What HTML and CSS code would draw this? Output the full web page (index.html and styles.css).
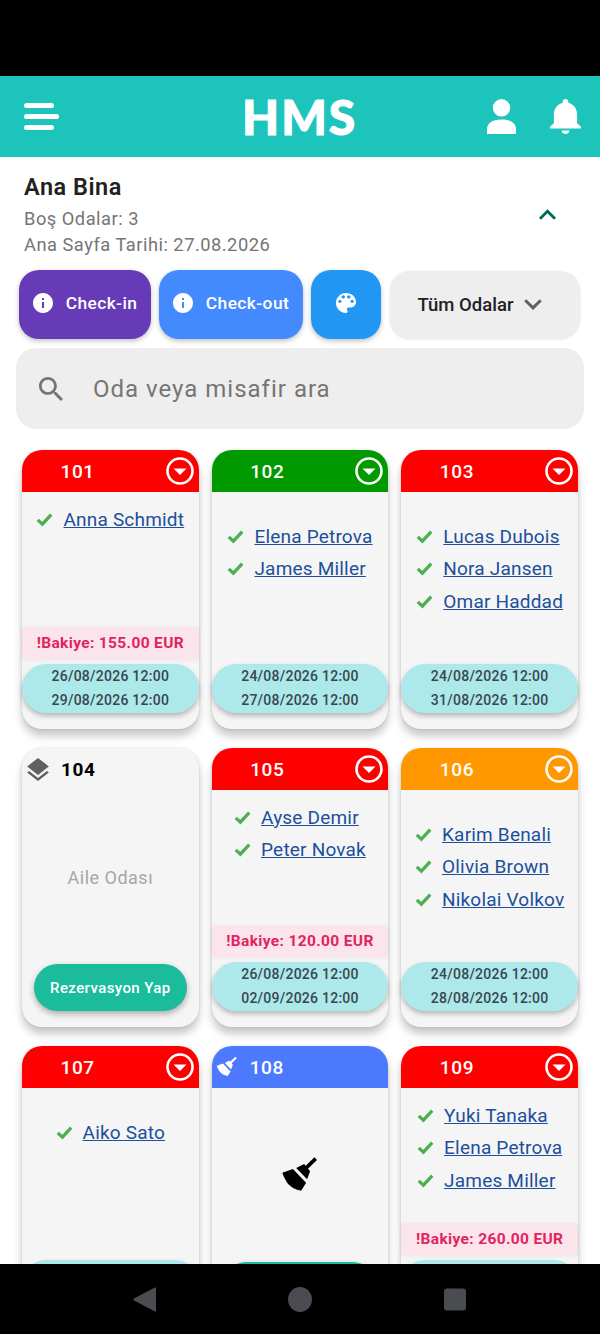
FILE: index.html
```html
<!DOCTYPE html>
<html lang="tr">
<head>
  <meta charset="UTF-8">
  <meta name="viewport" content="width=device-width, initial-scale=1.0">
  <title>HMS</title>
  <link rel="stylesheet" href="styles.css">
</head>
<body>

<svg class="icon-defs" width="0" height="0">
  <defs>
    <symbol id="i-info" viewBox="2 2 20 20"><path d="M12 2C6.48 2 2 6.48 2 12s4.48 10 10 10 10-4.48 10-10S17.52 2 12 2zm1 15h-2v-6h2v6zm0-8h-2V7h2v2z"/></symbol>
    <symbol id="i-check" viewBox="0 0 24 24"><path d="M2.5 12.5l6.5 6L21.5 5" fill="none" stroke="currentColor" stroke-width="4.6"/></symbol>
    <symbol id="i-broom" viewBox="30 20 115 115">
      <path d="M135 28L100 62" fill="none" stroke="currentColor" stroke-width="11"/>
      <path d="M76 56L100 44L118 66L109 90z" fill="currentColor"/>
      <path d="M34 71L66 59L106 101L91 125Q60 118 48 100Q38 85 34 71z" fill="currentColor"/>
    </symbol>
    <symbol id="i-menu-down" viewBox="0 0 28 28"><circle cx="14" cy="14" r="12.5" fill="none" stroke="#fff" stroke-width="2.6"/><path d="M7.5 11.5h13L14 18z" fill="#fff"/></symbol>
  </defs>
</svg>

<div class="phone">
  <div class="status-bar"></div>

  <header class="topbar">
    <div class="menu-btn"><span></span><span></span><span></span></div>
    <div class="logo">HMS</div>
    <div class="topbar-icons">
      <svg class="person-icon" viewBox="0 0 30 36"><circle cx="15" cy="9" r="9"/><path d="M0 36v-5c0-7 7-10 15-10s15 3 15 10v5z"/></svg>
      <svg class="bell-icon" viewBox="4 2.5 16 19.5" preserveAspectRatio="none"><path d="M12 22c1.1 0 2-.9 2-2h-4c0 1.1.89 2 2 2zm6-6v-5c0-3.07-1.64-5.64-4.5-6.32V4c0-.83-.67-1.5-1.5-1.5s-1.5.67-1.5 1.5v.68C7.63 5.36 6 7.92 6 11v5l-2 2v1h16v-1l-2-2z"/></svg>
    </div>
  </header>

  <main class="content">
    <section class="building">
      <div>
        <h1>Ana Bina</h1>
        <p>Boş Odalar: 3</p>
        <p>Ana Sayfa Tarihi: 27.08.2026</p>
      </div>
      <svg class="collapse-icon" viewBox="6 8 12 7.5"><path d="M12 8l-6 6 1.41 1.41L12 10.83l4.59 4.58L18 14z"/></svg>
    </section>

    <section class="actions">
      <button class="action action-in"><svg class="info-icon"><use href="#i-info"/></svg>Check-in</button>
      <button class="action action-out"><svg class="info-icon"><use href="#i-info"/></svg>Check-out</button>
      <button class="action action-palette">
        <svg class="palette-icon" viewBox="3 3 18 18"><path d="M12 3c-4.97 0-9 4.03-9 9s4.03 9 9 9c.83 0 1.5-.67 1.5-1.5 0-.39-.15-.74-.39-1.01-.23-.26-.38-.61-.38-.99 0-.83.67-1.5 1.5-1.5H16c2.76 0 5-2.24 5-5 0-4.42-4.03-8-9-8zm-5.5 9c-.83 0-1.5-.67-1.5-1.5S5.67 9 6.5 9 8 9.67 8 10.5 7.33 12 6.5 12zm3-4C8.67 8 8 7.33 8 6.5S8.67 5 9.5 5s1.5.67 1.5 1.5S10.33 8 9.5 8zm5 0c-.83 0-1.5-.67-1.5-1.5S13.67 5 14.5 5s1.5.67 1.5 1.5S15.33 8 14.5 8zm3 4c-.83 0-1.5-.67-1.5-1.5S16.67 9 17.5 9s1.5.67 1.5 1.5-.67 1.5-1.5 1.5z"/></svg>
      </button>
      <div class="room-filter">Tüm Odalar
        <svg class="filter-icon" viewBox="6 8.5 12 7.5"><path d="M16.59 8.59L12 13.17 7.41 8.59 6 10l6 6 6-6z"/></svg>
      </div>
    </section>

    <div class="search">
      <svg class="search-icon" viewBox="3 3 17.5 17.5"><path d="M15.5 14h-.79l-.28-.27C15.41 12.59 16 11.11 16 9.5 16 5.91 13.09 3 9.5 3S3 5.91 3 9.5 5.91 16 9.5 16c1.61 0 3.09-.59 4.23-1.57l.27.28v.79l5 4.99L20.49 19l-4.99-5zm-6 0C7.01 14 5 11.99 5 9.5S7.01 5 9.5 5 14 7.01 14 9.5 11.99 14 9.5 14z"/></svg>
      <span>Oda veya misafir ara</span>
    </div>

    <section class="rooms">

      <article class="room">
        <div class="room-head red"><span class="room-no">101</span><svg class="head-menu"><use href="#i-menu-down"/></svg></div>
        <ul class="guests">
          <li><svg class="check"><use href="#i-check"/></svg><a href="#">Anna Schmidt</a></li>
        </ul>
        <div class="balance">!Bakiye: 155.00 EUR</div>
        <div class="dates">26/08/2026 12:00<br>29/08/2026 12:00</div>
      </article>

      <article class="room">
        <div class="room-head green"><span class="room-no">102</span><svg class="head-menu"><use href="#i-menu-down"/></svg></div>
        <ul class="guests no-balance">
          <li><svg class="check"><use href="#i-check"/></svg><a href="#">Elena Petrova</a></li>
          <li><svg class="check"><use href="#i-check"/></svg><a href="#">James Miller</a></li>
        </ul>
        <div class="dates">24/08/2026 12:00<br>27/08/2026 12:00</div>
      </article>

      <article class="room">
        <div class="room-head red"><span class="room-no">103</span><svg class="head-menu"><use href="#i-menu-down"/></svg></div>
        <ul class="guests no-balance">
          <li><svg class="check"><use href="#i-check"/></svg><a href="#">Lucas Dubois</a></li>
          <li><svg class="check"><use href="#i-check"/></svg><a href="#">Nora Jansen</a></li>
          <li><svg class="check"><use href="#i-check"/></svg><a href="#">Omar Haddad</a></li>
        </ul>
        <div class="dates">24/08/2026 12:00<br>31/08/2026 12:00</div>
      </article>

      <article class="room">
        <div class="room-head plain">
          <svg class="layers-icon" viewBox="3 2 18 19.07"><path d="M11.99 18.54l-7.37-5.73L3 14.07l9 7 9-7-1.63-1.27-7.38 5.74zM12 16l7.36-5.73L21 9l-9-7-9 7 1.63 1.27L12 16z"/></svg>
          <span class="room-no">104</span>
        </div>
        <div class="room-type">Aile Odası</div>
        <button class="reserve">Rezervasyon Yap</button>
      </article>

      <article class="room">
        <div class="room-head red"><span class="room-no">105</span><svg class="head-menu"><use href="#i-menu-down"/></svg></div>
        <ul class="guests">
          <li><svg class="check"><use href="#i-check"/></svg><a href="#">Ayse Demir</a></li>
          <li><svg class="check"><use href="#i-check"/></svg><a href="#">Peter Novak</a></li>
        </ul>
        <div class="balance">!Bakiye: 120.00 EUR</div>
        <div class="dates">26/08/2026 12:00<br>02/09/2026 12:00</div>
      </article>

      <article class="room">
        <div class="room-head orange"><span class="room-no">106</span><svg class="head-menu"><use href="#i-menu-down"/></svg></div>
        <ul class="guests no-balance">
          <li><svg class="check"><use href="#i-check"/></svg><a href="#">Karim Benali</a></li>
          <li><svg class="check"><use href="#i-check"/></svg><a href="#">Olivia Brown</a></li>
          <li><svg class="check"><use href="#i-check"/></svg><a href="#">Nikolai Volkov</a></li>
        </ul>
        <div class="dates">24/08/2026 12:00<br>28/08/2026 12:00</div>
      </article>

      <article class="room">
        <div class="room-head red"><span class="room-no">107</span><svg class="head-menu"><use href="#i-menu-down"/></svg></div>
        <ul class="guests no-balance">
          <li><svg class="check"><use href="#i-check"/></svg><a href="#">Aiko Sato</a></li>
        </ul>
        <div class="dates"></div>
      </article>

      <article class="room">
        <div class="room-head blue">
          <svg class="head-broom"><use href="#i-broom"/></svg>
          <span class="room-no">108</span>
        </div>
        <div class="room-type"><svg class="big-broom"><use href="#i-broom"/></svg></div>
        <button class="reserve"></button>
      </article>

      <article class="room">
        <div class="room-head red"><span class="room-no">109</span><svg class="head-menu"><use href="#i-menu-down"/></svg></div>
        <ul class="guests">
          <li><svg class="check"><use href="#i-check"/></svg><a href="#">Yuki Tanaka</a></li>
          <li><svg class="check"><use href="#i-check"/></svg><a href="#">Elena Petrova</a></li>
          <li><svg class="check"><use href="#i-check"/></svg><a href="#">James Miller</a></li>
        </ul>
        <div class="balance">!Bakiye: 260.00 EUR</div>
        <div class="dates"></div>
      </article>

    </section>
  </main>

  <nav class="navbar">
    <svg class="nav-icon" viewBox="0 0 24 25"><path d="M23 1.5v22a1 1 0 0 1-1.6.8L1 13.5a1.2 1.2 0 0 1 0-2L21.4.7a1 1 0 0 1 1.6.8z"/></svg>
    <svg class="nav-icon" viewBox="0 0 24 25"><ellipse cx="12" cy="12.5" rx="12" ry="12.5"/></svg>
    <svg class="nav-icon" viewBox="0 0 24 25"><rect width="22" height="22" x="1" y="1.5" rx="3"/></svg>
  </nav>
</div>

</body>
</html>
```

FILE: styles.css
```css
* {
  box-sizing: border-box;
}

body {
  margin: 0;
  font-family: Roboto, "Noto Sans", sans-serif;
  background-color: #000;
}

.icon-defs {
  position: absolute;
}

.phone {
  display: flex;
  flex-direction: column;
  width: 600px;
  height: 1334px;
  overflow: hidden;
  background-color: #fff;
}

.status-bar {
  flex: none;
  height: 76px;
  background-color: #000;
}

/* Top bar */
.topbar {
  flex: none;
  display: flex;
  align-items: center;
  height: 81px;
  padding: 0 19px 0 24px;
  background-color: #1cc4bc;
}

.menu-btn {
  display: flex;
  flex-direction: column;
  gap: 6px;
  width: 35px;
}

.menu-btn span {
  display: block;
  height: 5px;
  border-radius: 3px;
  background-color: #fff;
}

.menu-btn span:first-child,
.menu-btn span:last-child {
  width: 30px;
}

.logo {
  margin-left: 183px;
  font-family: "Lato", sans-serif;
  font-size: 48px;
  font-weight: 900;
  line-height: 1;
  letter-spacing: 2px;
  color: #fff;
  -webkit-text-stroke: 1px #fff;
}

.topbar-icons {
  display: flex;
  align-items: center;
  gap: 34px;
  margin-left: auto;
}

.person-icon {
  width: 29px;
  height: 35px;
  fill: #fff;
}

.bell-icon {
  width: 31px;
  height: 35px;
  fill: #fff;
}

/* Building info */
.content {
  flex: 1;
  min-height: 0;
  overflow: hidden;
}

.building {
  display: flex;
  align-items: flex-start;
  justify-content: space-between;
  height: 113px;
  padding: 14px 44px 0 24px;
}

.building h1 {
  margin: 0 0 3px;
  font-size: 23.5px;
  font-weight: 600;
  line-height: 32px;
  letter-spacing: 0.5px;
  color: #212121;
}

.building p {
  margin: 0;
  font-size: 18.3px;
  line-height: 26px;
  letter-spacing: 0.5px;
  color: #757575;
}

.collapse-icon {
  width: 17px;
  height: 11px;
  margin-top: 38px;
  fill: #00695c;
}

/* Actions */
.actions {
  display: flex;
  gap: 8px;
  height: 69px;
  padding-left: 19px;
}

.action {
  display: flex;
  align-items: center;
  justify-content: center;
  gap: 13px;
  height: 69px;
  padding: 0 0 3px;
  border: none;
  border-radius: 20px;
  font-family: inherit;
  font-size: 17.4px;
  font-weight: 500;
  letter-spacing: 0.4px;
  color: #fff;
  box-shadow: 0 2px 5px rgba(0, 0, 0, 0.25);
}

.action-in {
  width: 132px;
  background-color: #673ab7;
}

.action-out {
  width: 144px;
  background-color: #448aff;
}

.action-palette {
  width: 70px;
  background-color: #2196f3;
}

.info-icon {
  width: 20px;
  height: 20px;
  fill: #fff;
}

.palette-icon {
  width: 20px;
  height: 20px;
  fill: #fff;
}

.room-filter {
  display: flex;
  align-items: center;
  justify-content: center;
  gap: 11px;
  width: 190px;
  height: 67px;
  margin: 1px 0 0 1px;
  padding-right: 10px;
  border-radius: 20px;
  font-size: 18.5px;
  font-weight: 500;
  color: #212121;
  background-color: #eeeeee;
  box-shadow: 0 1px 3px rgba(0, 0, 0, 0.12);
}

.filter-icon {
  width: 18px;
  height: 11px;
  fill: #616161;
}

.search {
  display: flex;
  align-items: center;
  gap: 30px;
  width: 568px;
  height: 81px;
  margin: 9px 0 21px 16px;
  padding-left: 23px;
  border-radius: 20px;
  font-size: 24px;
  letter-spacing: 1px;
  color: #757575;
  background-color: #eeeeee;
}

.search-icon {
  width: 24px;
  height: 24px;
  fill: #757575;
}

/* Room grid */
.rooms {
  display: grid;
  grid-template-columns: repeat(3, 1fr);
  column-gap: 13px;
  row-gap: 19px;
  padding: 0 22px;
}

.room {
  display: flex;
  flex-direction: column;
  height: 279px;
  padding-bottom: 16px;
  border-radius: 20px;
  background-color: #f5f5f5;
  box-shadow: 0 7px 9px rgba(0, 0, 0, 0.22), 0 0 3px rgba(0, 0, 0, 0.12);
}

.room-head {
  flex: none;
  display: flex;
  align-items: center;
  height: 42px;
  padding: 0 5px 0 38.5px;
  border-radius: 20px 20px 0 0;
  color: #fff;
}

.red { background-color: #ff0000; }
.green { background-color: #009900; }
.orange { background-color: #ff9800; }
.blue { background-color: #4d79ff; }

.room-head.plain {
  padding-left: 5px;
  color: #000;
}

.room-head.blue {
  padding-left: 4px;
}

.room-no {
  font-size: 19px;
  font-weight: 500;
  letter-spacing: 0.6px;
}

.plain .room-no {
  font-weight: 700;
}

.head-menu {
  width: 28px;
  height: 28px;
  margin: -1px 0 0 auto;
}

.layers-icon {
  width: 22px;
  height: 23px;
  margin-right: 12px;
  fill: #616161;
}

.head-broom {
  width: 22px;
  height: 22px;
  margin-right: 12px;
  color: #fff;
}

.guests {
  flex: 1;
  margin: 0;
  padding: 11px 0 0;
  list-style: none;
  display: grid;
  justify-content: center;
  align-content: start;
}

.guests.no-balance {
  padding-top: 28px;
}

.guests li {
  display: flex;
  align-items: center;
  gap: 10px;
  height: 32.5px;
}

.guests a {
  font-size: 19px;
  letter-spacing: 0.2px;
  color: #1c4f9c;
}

.check {
  width: 17px;
  height: 17px;
  color: #4caf50;
}

.balance {
  flex: none;
  height: 32px;
  margin-bottom: 5px;
  border-radius: 3px;
  font-size: 15.5px;
  font-weight: 700;
  line-height: 32px;
  letter-spacing: 0.35px;
  text-align: center;
  color: #e0245e;
  background-color: #fce4ec;
  box-shadow: 0 1px 4px rgba(0, 0, 0, 0.06);
}

.dates {
  flex: none;
  height: 49px;
  padding-top: 1px;
  border-radius: 25px;
  font-size: 14px;
  font-weight: 500;
  line-height: 23.5px;
  letter-spacing: 0.25px;
  text-align: center;
  color: #37474f;
  background-color: #ade8eb;
  box-shadow: 0 3px 5px rgba(0, 0, 0, 0.25);
}

.room-type {
  flex: 1;
  display: flex;
  align-items: center;
  justify-content: center;
  font-size: 18px;
  letter-spacing: 0.5px;
  color: #a6a6a6;
}

.big-broom {
  width: 38px;
  height: 38px;
  color: #000;
}

.reserve {
  flex: none;
  align-self: center;
  width: 153px;
  height: 47px;
  border: none;
  border-radius: 24px;
  font-family: inherit;
  font-size: 15px;
  font-weight: 500;
  letter-spacing: 0.4px;
  color: #fff;
  background-color: #1abc9c;
  box-shadow: 0 3px 6px rgba(0, 0, 0, 0.3);
}

/* Bottom nav */
.navbar {
  flex: none;
  display: flex;
  align-items: center;
  justify-content: center;
  gap: 131px;
  height: 70px;
  background-color: #000;
}

.nav-icon {
  width: 24px;
  height: 25px;
  fill: #4a4c52;
}
```
